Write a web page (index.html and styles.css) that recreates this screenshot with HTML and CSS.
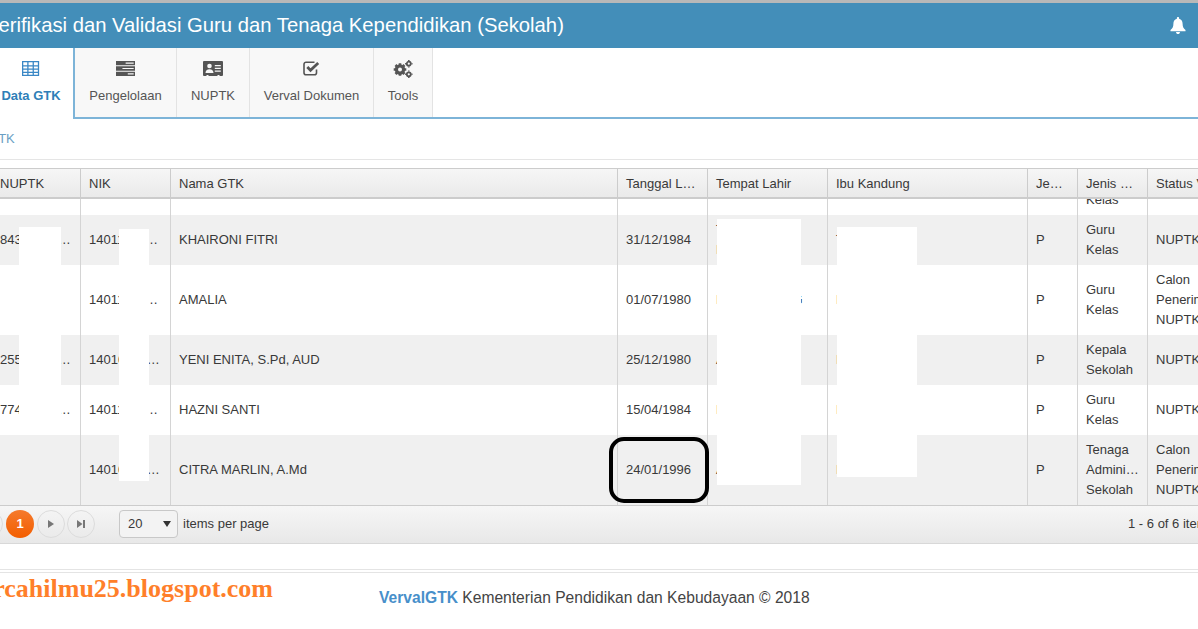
FILE: index.html
```html
<!DOCTYPE html>
<html lang="id">
<head>
<meta charset="utf-8">
<title>Verifikasi dan Validasi Guru dan Tenaga Kependidikan (Sekolah)</title>
<link rel="stylesheet" href="styles.css">
</head>
<body>
<div class="shell">
  <header class="topbar">
    <h1 class="title">Verifikasi dan Validasi Guru dan Tenaga Kependidikan (Sekolah)</h1>
    <svg class="bell" viewBox="0 0 16 17"><path fill="#fff" d="M8 0c.7 0 1.100.4 1.100 1.100v.7c2.400.5 3.500 2.400 3.500 4.900 0 3.200.9 4.700 2.900 6.300v1.200H.5V13c2-1.600 2.900-3.100 2.900-6.300 0-2.500 1.100-4.400 3.500-4.900v-.7C6.900.4 7.300 0 8 0zM6 14.900h4c0 1.200-.9 2.100-2 2.100s-2-.9-2-2.100z"/></svg>
  </header>

  <nav class="tabs">
    <a class="tab tab-active">
      <svg class="ico" viewBox="0 0 16 14"><path fill="none" stroke="#3a87c5" stroke-width="1.200" d="M.6.600h14.800v12.800H.6zM.6 4.600h14.800M.6 7.600h14.800M.6 10.600h14.800M5.500.600v12.800M10.500.600v12.800"/></svg>
      <span>Data GTK</span>
    </a>
    <a class="tab tab-kelola">
      <svg class="ico" viewBox="0 0 18 14"><path fill="#555" d="M0 0h18v4H0zM0 5h18v4H0zM0 10h18v4H0z"/><path fill="#f8f8f8" d="M9 1.500h7.500v1H9zM6 6.500h10.500v1H6zM11 11.500h5.500v1H11z"/></svg>
      <span>Pengelolaan</span>
    </a>
    <a class="tab tab-nuptk">
      <svg class="ico" viewBox="0 0 20 15"><path fill="#555" d="M1 0h18a1 1 0 0 1 1 1v13a1 1 0 0 1-1 1h-2.500v-1h-2v1h-9v-1h-2v1H1a1 1 0 0 1-1-1V1a1 1 0 0 1 1-1z"/><circle cx="6.500" cy="5" r="2.300" fill="#f8f8f8"/><path fill="#f8f8f8" d="M2.500 12c0-2.500 1.500-3.800 4-3.800s4 1.300 4 3.800zM11.800 4h6v1.200h-6zM11.800 6.800h6V8h-6zM11.800 9.600h6v1.200h-6z"/></svg>
      <span>NUPTK</span>
    </a>
    <a class="tab tab-verval">
      <svg class="ico" viewBox="0 0 17 15"><path fill="none" stroke="#555" stroke-width="1.600" d="M13.500 8.500v3.300a2 2 0 0 1-2 2H3a2 2 0 0 1-2-2V3.300a2 2 0 0 1 2-2h8.500"/><path fill="none" stroke="#555" stroke-width="2.800" d="M4.300 6l3.200 3.200L15.200 2"/></svg>
      <span>Verval Dokumen</span>
    </a>
    <a class="tab tab-tools">
      <svg class="ico ico-cogs" viewBox="0 0 20 18"><g fill="none" stroke="#555"><circle cx="7" cy="9.500" r="3.600" stroke-width="3.200"/><path stroke-width="2.600" d="M7 3.200v2M7 13.800v2M.7 9.500h2M11.300 9.500h2M2.500 5l1.500 1.500M10 12.500l1.500 1.500M2.500 14L4 12.500M10 6.500L11.500 5"/><circle cx="15.800" cy="3.700" r="2" stroke-width="1.800"/><circle cx="15.800" cy="14.300" r="2" stroke-width="1.800"/><path stroke-width="1.500" d="M15.800 0v1M15.800 6.400v1M12.100 3.700h1M18.500 3.700h1M15.800 10.600v1M15.800 17v1M12.100 14.300h1M18.500 14.300h1"/></g></svg>
      <span>Tools</span>
    </a>
  </nav>

  <div class="crumb"><span>Data GTK</span></div>

  <section class="grid">
    <table class="tbl tbl-head">
      <colgroup><col class="c1"><col class="c2"><col class="c3"><col class="c4"><col class="c5"><col class="c6"><col class="c7"><col class="c8"><col class="c9"></colgroup>
      <thead>
        <tr><th>NUPTK</th><th>NIK</th><th>Nama GTK</th><th>Tanggal Lahir</th><th>Tempat Lahir</th><th>Ibu Kandung</th><th>Jenis Kelamin</th><th>Jenis PTK</th><th>Status Validasi</th></tr>
      </thead>
    </table>
    <div class="grid-body">
      <table class="tbl tbl-rows">
        <colgroup><col class="c1"><col class="c2"><col class="c3"><col class="c4"><col class="c5"><col class="c6"><col class="c7"><col class="c8"><col class="c9"></colgroup>
        <tbody>
          <tr><td></td><td></td><td></td><td></td><td></td><td></td><td></td><td>Guru Kelas</td><td></td></tr>
          <tr class="alt"><td>8431234567890123</td><td>1401112345678901</td><td>KHAIRONI FITRI</td><td>31/12/1984</td><td>TELUK KUANTAN</td><td>TUTI</td><td>P</td><td>Guru Kelas</td><td>NUPTK Valid</td></tr>
          <tr><td></td><td>1401112345678902</td><td>AMALIA</td><td>01/07/1980</td><td>BANGKINANG</td><td>BAINAH</td><td>P</td><td>Guru Kelas</td><td>Calon Penerima NUPTK</td></tr>
          <tr class="alt"><td>2551234567890123</td><td>1401012345678903</td><td>YENI ENITA, S.Pd, AUD</td><td>25/12/1980</td><td>AIR TIRIS</td><td>BAINAH</td><td>P</td><td>Kepala Sekolah</td><td>NUPTK Valid</td></tr>
          <tr><td>7741234567890123</td><td>1401112345678904</td><td>HAZNI SANTI</td><td>15/04/1984</td><td>BANGKO</td><td>BAINAH</td><td>P</td><td>Guru Kelas</td><td>NUPTK Valid</td></tr>
          <tr class="alt"><td></td><td>1401012345678905</td><td>CITRA MARLIN, A.Md</td><td>24/01/1996</td><td>AIR TIRIS</td><td>BAINAH</td><td>P</td><td>Tenaga Administrasi Sekolah</td><td>Calon Penerima NUPTK</td></tr>
        </tbody>
      </table>
    </div>
    <div class="pager">
      <span class="pbtn pbtn-gap"></span>
      <span class="pnum">1</span>
      <span class="pbtn"><svg viewBox="0 0 10 10" class="parrow"><path fill="#777" d="M2 1l6 4-6 4z"/></svg></span>
      <span class="pbtn"><svg viewBox="0 0 10 10" class="parrow"><path fill="#777" d="M1 1l5.500 4L1 9zM7 1h2v8H7z"/></svg></span>
      <span class="psel"><span>20</span><i class="caret"></i></span>
      <span class="plabel">items per page</span>
      <span class="pinfo">1 - 6 of 6 items</span>
    </div>
  </section>

  <footer class="foot">
    <p class="foot-text"><b>VervalGTK</b> Kementerian Pendidikan dan Kebudayaan © 2018</p>
  </footer>

  <div class="mask m1"></div>
  <div class="mask m2"></div>
  <div class="mask m3"></div>
  <div class="mask m4"></div>
  <div class="ring"></div>
  <div class="mark">pencarcahilmu25.blogspot.com</div>
</div>
</body>
</html>
```
FILE: styles.css
```css
html, body { margin: 0; padding: 0; height: 629px; overflow: hidden; background: #fff; }
body { font-family: "Liberation Sans", Arial, sans-serif; font-size: 13px; color: #393939; }
.shell { position: relative; width: 1268px; height: 629px; margin-left: -20px; overflow: hidden; }

.topbar { display: flex; align-items: center; justify-content: space-between; height: 45px; border-top: 3px solid #b8b8b8; background: #438eb9; color: #fff; padding-right: 62px; padding-left: 6px; }
.title { margin: 0; font-size: 20.260px; font-weight: 400; line-height: 45px; }
.bell { width: 16px; height: 17px; }

.tabs { display: flex; height: 69px; border-bottom: 2px solid #7db4d8; }
.tab { display: flex; flex-direction: column; align-items: center; box-sizing: border-box; height: 69px; padding-top: 13px; background: #f8f8f8; border-right: 1px solid #e3e3e3; color: #555; }
.tab span { margin-top: 10px; line-height: 20px; }
.ico { display: block; height: 15px; }
.ico-cogs { height: 18px; margin-top: -1px; margin-bottom: -2px; }
.tab-active { width: 95px; height: 71px; background: #fff; border-right: 2px solid #7db4d8; color: #2f7fb8; font-weight: 700; padding-left: 9px; }
.tab-kelola { width: 102px; }
.tab-nuptk { width: 73px; }
.tab-verval { width: 124px; }
.tab-tools { width: 59px; }

.crumb { height: 40px; border-bottom: 1px solid #e5e5e5; line-height: 40px; color: #6b9fc4; text-indent: -23px; }

.grid { margin-top: 8px; margin-left: 12px; width: 1256px; }
.tbl { width: 1256px; table-layout: fixed; border-collapse: separate; border-spacing: 0; }
.c1 { width: 89px; } .c2 { width: 90px; } .c3 { width: 447px; } .c4 { width: 90px; } .c5 { width: 120px; }
.c6 { width: 200px; } .c7 { width: 50px; } .c8 { width: 70px; } .c9 { width: 100px; }
.tbl-head th { box-sizing: border-box; height: 31px; padding: 1px 8px 0; border-top: 1px solid #ccc; border-bottom: 2px solid #ccc; border-right: 1px solid #ccc; background: linear-gradient(#f6f6f6, #eaeaea); font-weight: 400; text-align: left; white-space: nowrap; overflow: hidden; text-overflow: ellipsis; line-height: 20px; }
.grid-body { height: 306px; overflow: hidden; }
.tbl-rows { margin-top: -34px; }
.tbl-rows td { padding: 5px 8px; border-right: 1px solid #d4d4d4; line-height: 20px; overflow: hidden; text-overflow: ellipsis; vertical-align: middle; }
.tbl-rows td:nth-child(1), .tbl-rows td:nth-child(2) { white-space: nowrap; }
.alt td { background: #f0f0f0; }

.pager { position: relative; display: flex; align-items: center; box-sizing: border-box; height: 39px; padding-bottom: 2px; border-top: 1px solid #ccc; border-bottom: 1px solid #d8d8d8; background: linear-gradient(#f6f6f6, #e8e8e8); }
.pbtn { display: flex; align-items: center; justify-content: center; box-sizing: border-box; width: 28px; height: 28px; margin-right: 2px; border: 1px solid #dcdcdc; border-radius: 50%; }
.pbtn-gap { margin-left: -17px; margin-right: 3px; }
.parrow { width: 10px; height: 10px; }
.pnum { display: flex; align-items: center; justify-content: center; width: 28px; height: 28px; margin-right: 3px; border-radius: 50%; background: linear-gradient(#f57a2c, #f35e00); color: #fff; font-weight: 700; }
.psel { display: flex; align-items: center; justify-content: space-between; box-sizing: border-box; width: 59px; height: 28px; margin-left: 22px; padding: 0 6px 0 8px; border: 1px solid #c8c8c8; border-radius: 4px; background: #f3f3f3; }
.caret { width: 0; height: 0; border-left: 4.500px solid transparent; border-right: 4.500px solid transparent; border-top: 6px solid #333; }
.plabel { margin-left: 5px; }
.pinfo { margin-left: auto; padding-right: 34px; }

.foot { margin-top: 25px; border-top: 1px solid #e4e4e4; padding-top: 2px; }
.foot-text { margin: 0; padding-top: 15px; padding-left: 399px; border-top: 1px solid #e4e4e4; font-size: 15.620px; line-height: 20px; color: #444; }
.foot-text b { color: #478fca; }

.mask { position: absolute; background: #fff; }
.m1 { left: 39px; top: 227px; width: 42px; height: 208px; }
.m2 { left: 139px; top: 229px; width: 30px; height: 252px; }
.m3 { left: 737px; top: 219px; width: 84px; height: 266px; }
.m4 { left: 857px; top: 227px; width: 80px; height: 250px; }
.ring { position: absolute; left: 629px; top: 437px; box-sizing: border-box; width: 100px; height: 66px; border: 4px solid #000; border-radius: 15px; }
.mark { position: absolute; right: 975px; top: 574px; font-family: "Liberation Serif", serif; font-size: 26px; font-weight: 700; line-height: 30px; color: #ff7f2a; white-space: nowrap; }
```
